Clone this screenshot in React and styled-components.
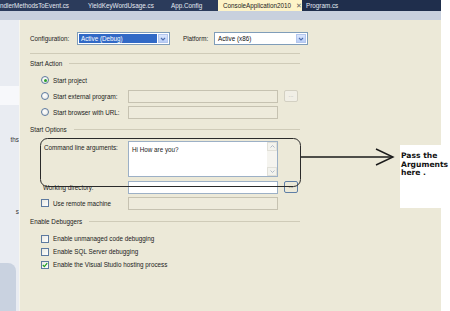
import styled, { createGlobalStyle } from "styled-components";

const Global = createGlobalStyle`
  html, body { margin: 0; padding: 0; background: #fff; }
  body {
    width: 450px;
    height: 311px;
    overflow: hidden;
    font-family: "Liberation Sans", Arial, sans-serif;
    color: #1a1a1a;
  }
`;

const Screen = styled.div`
  position: relative;
  width: 450px;
  height: 311px;
  display: flex;
  flex-direction: column;
  background: #fff;
  overflow: hidden;
`;

// tabs on top
const TabBar = styled.div`
  display: flex;
  width: 441px;
  height: 11px;
  background: #2b3b5b;
`;

const Tab = styled.div`
  display: flex;
  align-items: center;
  gap: 5px;
  width: ${(p) => p.$w}px;
  padding-left: ${(p) => p.$pad}px;
  box-sizing: border-box;
  font-size: 6.3px;
  white-space: nowrap;
  overflow: hidden;
  color: ${(p) => (p.$active ? "#222" : "#e4e9f2")};
  background: ${(p) => (p.$active ? "#fdf3c8" : p.$dark ? "#1f2e4c" : "transparent")};
`;

const Close = styled.span`
  color: #666;
  font-size: 6.5px;
`;

const Band = styled.div`
  width: 441px;
  height: 9px;
  background: #c8d0dd;
`;

const Body = styled.div`
  flex: 1;
  display: flex;
`;

const Sidebar = styled.div`
  width: 19px;
  display: flex;
  flex-direction: column;
  background: #e9ecf2;
  font-size: 6.3px;
  color: #333;
`;

const SideItem = styled.div`
  height: ${(p) => p.$h}px;
  background: ${(p) => p.$bg || "transparent"};
  display: flex;
  align-items: center;
  justify-content: flex-end;
  overflow: hidden;
  white-space: nowrap;
  border-radius: ${(p) => (p.$round ? "0 8px 0 0" : "0")};
  margin-right: ${(p) => (p.$round ? 3 : 0)}px;
`;

const Panel = styled.div`
  width: 422px;
  box-sizing: border-box;
  border-left: 1px solid #f6f5ee;
  background: #ece9d8;
  padding: 12px 0 0 10px;
  font-size: 6.3px;
  display: flex;
  flex-direction: column;
`;

const WhiteEdge = styled.div`
  flex: 1;
  background: #fff;
`;

const ConfigRow = styled.div`
  display: flex;
  align-items: center;
  height: 13px;
`;

const Label = styled.span`
  width: ${(p) => p.$w}px;
  margin-left: ${(p) => p.$ml || 0}px;
  white-space: nowrap;
`;

const Select = styled.div`
  width: ${(p) => p.$w}px;
  height: 13px;
  box-sizing: border-box;
  border: 1px solid #7f9db9;
  background: #fff;
  display: flex;
  align-items: stretch;
  padding: 1px;
`;

const SelectValue = styled.div`
  flex: 1;
  display: flex;
  align-items: center;
  padding-left: 2px;
  background: ${(p) => (p.$selected ? "#3169c6" : "#fff")};
  color: ${(p) => (p.$selected ? "#fff" : "#111")};
  white-space: nowrap;
`;

const ArrowBtn = styled.div`
  width: 10px;
  margin-left: 1px;
  background: linear-gradient(#dbe6fc, #b9cdf6);
  border: 1px solid #b3c6ee;
  box-sizing: border-box;
  display: flex;
  align-items: center;
  justify-content: center;
`;

const Separator = styled.div`
  width: 270px;
  height: 0;
  border-top: 1px solid #cfcbb8;
  margin-top: ${(p) => p.$mt}px;
`;

const SectionHeader = styled.div`
  display: flex;
  align-items: center;
  gap: 7px;
  width: 270px;
  height: 10px;
  margin-top: ${(p) => p.$mt}px;
  white-space: nowrap;
  &::after {
    content: "";
    flex: 1;
    border-top: 1px solid #cfcbb8;
  }
`;

const FieldRow = styled.div`
  display: grid;
  grid-template-columns: 87px 150px 6px 14px;
  align-items: ${(p) => (p.$top ? "start" : "center")};
  height: ${(p) => p.$h || 16}px;
  padding-left: 11px;
  margin-top: ${(p) => p.$mt || 0}px;
`;

const Choice = styled.div`
  display: flex;
  align-items: center;
  gap: 4px;
  white-space: nowrap;
  padding-left: ${(p) => p.$pl || 0}px;
  padding-top: ${(p) => p.$pt || 0}px;
`;

const Radio = styled.span`
  width: 8px;
  height: 8px;
  box-sizing: border-box;
  border-radius: 50%;
  border: 1px solid #5d7aa0;
  background: radial-gradient(circle at 40% 40%, #fff, #e6e6e0);
  display: flex;
  align-items: center;
  justify-content: center;
  &::after {
    content: "";
    width: 3px;
    height: 3px;
    border-radius: 50%;
    background: ${(p) => (p.$on ? "#2ca02c" : "transparent")};
  }
`;

const Check = styled.span`
  width: 8px;
  height: 8px;
  box-sizing: border-box;
  border: 1px solid #5d7aa0;
  background: linear-gradient(135deg, #e9e9e2, #fff);
  display: flex;
  align-items: center;
  justify-content: center;
`;

const TextBox = styled.div`
  height: 13px;
  box-sizing: border-box;
  border: 1px solid ${(p) => (p.$off ? "#c6c2b1" : "#9cb0c6")};
  background: ${(p) => (p.$off ? "#eeebdc" : "#fff")};
`;

const TextArea = styled.div`
  height: 36px;
  box-sizing: border-box;
  border: 1px solid #9cb0c6;
  background: #fff;
  display: flex;
`;

const AreaText = styled.div`
  flex: 1;
  padding: 4px 0 0 3px;
`;

const ScrollBar = styled.div`
  width: 10px;
  background: #f5f4ef;
  display: flex;
  flex-direction: column;
  justify-content: space-between;
`;

const ScrollBtn = styled.div`
  height: 9px;
  display: flex;
  align-items: center;
  justify-content: center;
  background: #f3f3ee;
  border: 1px solid #e1e0d8;
  box-sizing: border-box;
`;

const DotsBtn = styled.div`
  grid-column: 4;
  height: 12px;
  box-sizing: border-box;
  border: 1px solid ${(p) => (p.$focus ? "#5f7fa6" : "#d3d0c2")};
  border-radius: 2px;
  background: ${(p) => (p.$focus ? "#ece9d8" : "#f1efe6")};
  color: ${(p) => (p.$focus ? "#333" : "#aaa")};
  font-size: 6px;
  line-height: 8px;
  text-align: center;
`;

const CheckRow = styled.div`
  height: 13px;
  display: flex;
  align-items: center;
  padding-left: 11px;
  margin-top: ${(p) => p.$mt || 0}px;
`;

// annotation drawn over the page
const Overlay = styled.svg`
  position: absolute;
  left: 0;
  top: 0;
  pointer-events: none;
`;

const Callout = styled.div`
  position: absolute;
  left: 400px;
  top: 145px;
  width: 50px;
  height: 63px;
  box-sizing: border-box;
  background: #fff;
  padding: 7px 0 0 1px;
  font-family: "DejaVu Sans", Verdana, sans-serif;
  font-weight: bold;
  font-size: 7.6px;
  line-height: 8.6px;
  color: #111;
`;

const Chevron = ({ color = "#4d6fb0" }) => (
  <svg width="6" height="4" viewBox="0 0 6 4">
    <path d="M1 1 L3 3 L5 1" fill="none" stroke={color} strokeWidth="1.1" />
  </svg>
);

const Tick = () => (
  <svg width="6" height="6" viewBox="0 0 6 6">
    <path d="M0.8 3 L2.4 4.6 L5.2 1.2" fill="none" stroke="#25a025" strokeWidth="1.3" />
  </svg>
);

const Tiny = ({ up }) => (
  <svg width="5" height="3" viewBox="0 0 5 3">
    <path d={up ? "M0.5 2.5 L2.5 0.5 L4.5 2.5" : "M0.5 0.5 L2.5 2.5 L4.5 0.5"} fill="none" stroke="#a9b4c4" strokeWidth="0.9" />
  </svg>
);

export default function App() {
  return (
    <Screen>
      <Global />
      <TabBar>
        <Tab $w={82} $pad={0}>ndlerMethodsToEvent.cs</Tab>
        <Tab $w={82} $pad={6}>YieldKeyWordUsage.cs</Tab>
        <Tab $w={54} $pad={7}>App.Config</Tab>
        <Tab $w={84} $pad={5} $active>
          ConsoleApplication2010 <Close>✕</Close>
        </Tab>
        <Tab $w={139} $pad={4} $dark>Program.cs</Tab>
      </TabBar>
      <Band />
      <Body>
        <Sidebar>
          <SideItem $h={66} />
          <SideItem $h={19} $bg="#f7f8fb" />
          <SideItem $h={68}>ths</SideItem>
          <SideItem $h={76}>s</SideItem>
          <SideItem $h={14} />
          <SideItem $h={48} $bg="#c9d2e0" $round />
        </Sidebar>
        <Panel>
          <ConfigRow>
            <Label $w={47}>Configuration:</Label>
            <Select $w={93}>
              <SelectValue $selected>Active (Debug)</SelectValue>
              <ArrowBtn>
                <Chevron />
              </ArrowBtn>
            </Select>
            <Label $w={31} $ml={13}>Platform:</Label>
            <Select $w={94}>
              <SelectValue>Active (x86)</SelectValue>
              <ArrowBtn>
                <Chevron />
              </ArrowBtn>
            </Select>
          </ConfigRow>
          <Separator $mt={8} />

          <SectionHeader $mt={4}>Start Action</SectionHeader>
          <FieldRow $mt={4}>
            <Choice>
              <Radio $on />
              Start project
            </Choice>
          </FieldRow>
          <FieldRow>
            <Choice>
              <Radio />
              Start external program:
            </Choice>
            <TextBox $off />
            <DotsBtn>...</DotsBtn>
          </FieldRow>
          <FieldRow>
            <Choice>
              <Radio />
              Start browser with URL:
            </Choice>
            <TextBox $off />
          </FieldRow>

          <SectionHeader $mt={4}>Start Options</SectionHeader>
          <FieldRow $top $h={36} $mt={7}>
            <Choice $pl={3} $pt={3}>Command line arguments:</Choice>
            <TextArea>
              <AreaText>Hi How are you?</AreaText>
              <ScrollBar>
                <ScrollBtn>
                  <Tiny up />
                </ScrollBtn>
                <ScrollBtn>
                  <Tiny />
                </ScrollBtn>
              </ScrollBar>
            </TextArea>
          </FieldRow>
          <FieldRow $mt={2}>
            <Choice $pl={2}>Working directory:</Choice>
            <TextBox />
            <DotsBtn $focus>...</DotsBtn>
          </FieldRow>
          <FieldRow>
            <Choice>
              <Check />
              Use remote machine
            </Choice>
            <TextBox $off />
          </FieldRow>

          <SectionHeader $mt={5}>Enable Debuggers</SectionHeader>
          <CheckRow $mt={6}>
            <Choice>
              <Check />
              Enable unmanaged code debugging
            </Choice>
          </CheckRow>
          <CheckRow>
            <Choice>
              <Check />
              Enable SQL Server debugging
            </Choice>
          </CheckRow>
          <CheckRow>
            <Choice>
              <Check>
                <Tick />
              </Check>
              Enable the Visual Studio hosting process
            </Choice>
          </CheckRow>
        </Panel>
        <WhiteEdge />
      </Body>

      <Overlay width="450" height="311" viewBox="0 0 450 311">
        <rect x="40.5" y="138.5" width="260" height="48" rx="7" fill="none" stroke="#2a2a2a" strokeWidth="1" />
        <line x1="301" y1="157" x2="392" y2="157" stroke="#1a1a1a" strokeWidth="1.3" />
        <path d="M376 149 L393 157 L376 165" fill="none" stroke="#1a1a1a" strokeWidth="1.4" />
      </Overlay>
      <Callout>
        Pass the
        <br />
        Arguments
        <br />
        here .
      </Callout>
    </Screen>
  );
}
